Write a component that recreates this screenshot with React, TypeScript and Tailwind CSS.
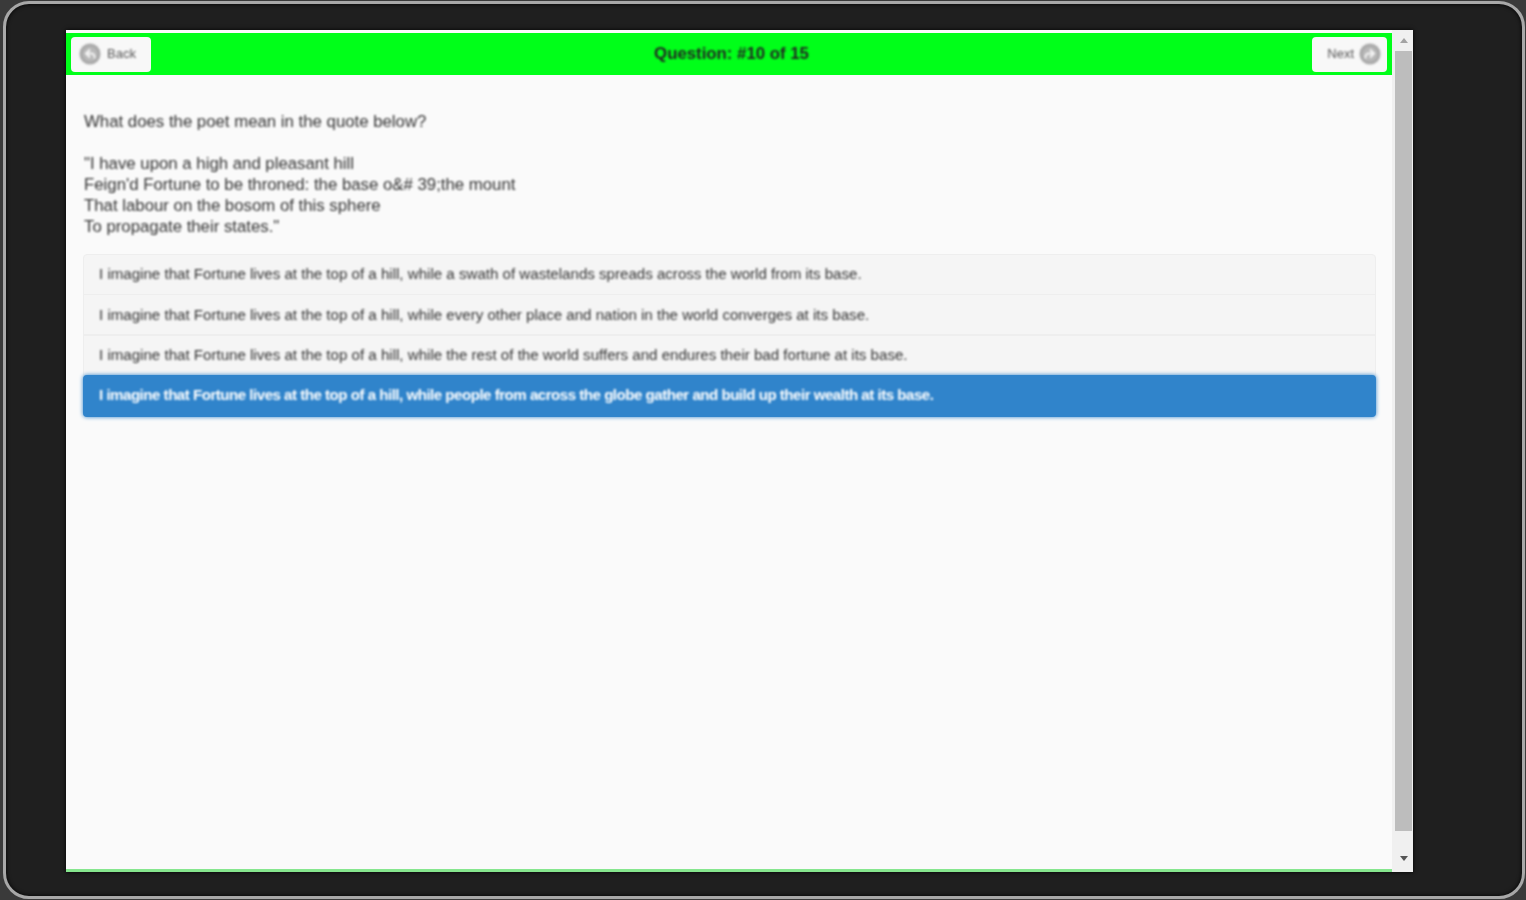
import { ReactNode } from 'react';

const options = [
  'I imagine that Fortune lives at the top of a hill, while a swath of wastelands spreads across the world from its base.',
  'I imagine that Fortune lives at the top of a hill, while every other place and nation in the world converges at its base.',
  'I imagine that Fortune lives at the top of a hill, while the rest of the world suffers and endures their bad fortune at its base.',
  'I imagine that Fortune lives at the top of a hill, while people from across the globe gather and build up their wealth at its base.',
];

function CircleIcon({ flip }: { flip?: boolean }) {
  return (
    <svg width="22" height="22" viewBox="0 0 22 22" className={flip ? '-scale-x-100' : ''}>
      <circle cx="11" cy="11" r="10.5" fill="#a9a9a9" />
      <circle cx="11" cy="11" r="7.5" fill="#b8b8b8" />
      <path d="M11 6.5 7 10.5l4 4M7.5 10.5h5a3 3 0 0 1 3 3v2" fill="none" stroke="#f5f5f5" strokeWidth="2" />
    </svg>
  );
}

function NavButton({ children }: { children: ReactNode }) {
  return (
    <div className="flex h-[35px] items-center rounded-[4px] bg-[#f8f8f8] text-[13px] text-[#555]">{children}</div>
  );
}

export default function App() {
  return (
    <div className="h-[900px] w-[1526px] overflow-hidden bg-[#3a3a3a] font-['Liberation_Sans',Arial,sans-serif] pt-[1px] pl-[3px] pr-[1px]">
      <div className="box-border flex h-[898px] w-full items-start rounded-[26px] border-[3px] border-[#a8a8a8] bg-[#1f1f1f] pl-[60px] pt-[26px] shadow-[inset_0_0_4px_#000]">
        <div className="flex h-[842px] w-[1347px] bg-[#f0f0f0] shadow-[0_0_4px_#000]">
          <div className="flex h-full w-[1326px] flex-col bg-[#fafafa]">
            <div className="mt-[3px] flex h-[42px] items-center justify-between bg-[#00ff19] px-[5px]">
              <NavButton>
                <div className="flex w-[80px] items-center gap-[6px] pl-[8px] blur-[0.8px]">
                  <CircleIcon />
                  <span>Back</span>
                </div>
              </NavButton>
              <div className="text-[16.8px] font-bold text-[#222] blur-[0.8px]">Question: #10 of 15</div>
              <NavButton>
                <div className="flex w-[75px] items-center justify-end gap-[5px] pr-[6px] blur-[0.8px]">
                  <span>Next</span>
                  <CircleIcon flip />
                </div>
              </NavButton>
            </div>
            <div className="flex-1 pl-[17px] pr-[16px] pt-[36px]">
              <div className="ml-[1px] text-[16.8px] leading-[21px] text-[#333] blur-[0.8px]">
                <p className="mb-[21px]">What does the poet mean in the quote below?</p>
                <p>"I have upon a high and pleasant hill</p>
                <p>Feign'd Fortune to be throned: the base o&amp;# 39;the mount</p>
                <p>That labour on the bosom of this sphere</p>
                <p>To propagate their states."</p>
              </div>
              <div className="mt-[17px] flex flex-col">
                {options.map((text, i) =>
                  i === 3 ? (
                    <div
                      key={text}
                      className="flex h-[42px] items-center rounded-[4px] bg-[#3084cb] pb-[1px] pl-[16px] text-[15.1px] font-bold tracking-[-0.5px] text-white shadow-[0_0_4px_#3084cb]"
                    >
                      <span className="blur-[0.8px]">{text}</span>
                    </div>
                  ) : (
                    <div
                      key={text}
                      className="-mb-[0.67px] flex h-[41px] items-center border border-[#eeeeee] bg-[#f5f5f5] pl-[15px] text-[15.1px] text-[#333] first:rounded-t-[4px]"
                    >
                      <span className="blur-[0.8px]">{text}</span>
                    </div>
                  ),
                )}
              </div>
            </div>
            <div className="h-[3px] bg-[#86e68e] blur-[0.5px]" />
          </div>
          <div className="flex h-full w-[21px] flex-col items-center bg-[#f0f0f0] pl-[2px] blur-[0.5px]">
            <div className="mt-[8px] h-0 w-0 border-x-[4px] border-b-[5px] border-x-transparent border-b-[#a3a3a3]" />
            <div className="mt-[8px] h-[780px] w-[17px] bg-[#bdbdbd]" />
            <div className="mt-[25px] h-0 w-0 border-x-[4px] border-t-[5px] border-x-transparent border-t-[#555]" />
          </div>
        </div>
      </div>
    </div>
  );
}
